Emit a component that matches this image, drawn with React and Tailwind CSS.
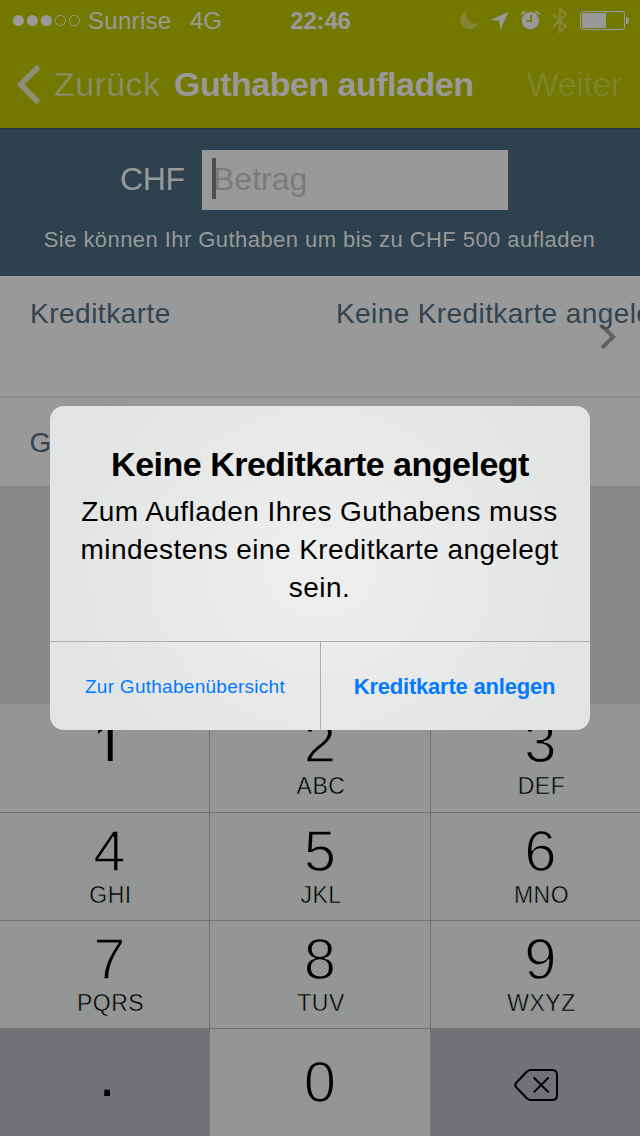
import React from "react";

function SignalDots() {
  return (
    <svg width="76" height="41" viewBox="12 0 76 41" className="block shrink-0">
      <g fill="#999999">
        <circle cx="18.4" cy="20.5" r="5.6" />
        <circle cx="32.4" cy="20.5" r="5.6" />
        <circle cx="46.4" cy="20.5" r="5.6" />
      </g>
      <g fill="none" stroke="#999999" strokeWidth="1">
        <circle cx="60.4" cy="20.5" r="5.1" />
        <circle cx="74.4" cy="20.5" r="5.1" />
      </g>
    </svg>
  );
}

function StatusIcons() {
  return (
    <svg width="180" height="41" viewBox="460 0 180 41" className="block shrink-0">
      <path d="M466.5 11.2A9.2 9.2 0 1 0 478 23.2A9.4 9.4 0 0 1 466.5 11.2Z" fill="#848635" />
      <path d="M508.3 12L490.2 19.9L499.3 20.8L500.4 30Z" fill="#999999" />
      <circle cx="530.4" cy="20.6" r="8.7" fill="#999999" />
      <path d="M521.8 14.8Q522 12 525.6 11.8M539 14.8Q538.8 12 535.2 11.8" fill="none" stroke="#999999" strokeWidth="1.8" />
      <path d="M531.2 14.8V21.2H526.4" fill="none" stroke="#737900" strokeWidth="1.8" />
      <path d="M552.8 14.3L566 26.6L559.8 32V8.8L566 14.3L552.8 27" fill="none" stroke="#86883c" strokeWidth="1.9" />
      <rect x="580.5" y="11.5" width="44" height="18" rx="2.5" fill="none" stroke="#999999" />
      <rect x="582" y="13" width="24" height="15" rx="0.8" fill="#999999" />
      <path d="M626 17H627.4Q629 17.6 629 20.5T627.4 24H626Z" fill="#999999" />
    </svg>
  );
}

function Header() {
  return (
    <header className="h-32 bg-[#737900] text-[#999999]">
      <div className="grid h-[41px] grid-cols-[1fr_auto_1fr] text-2xl/[41px]">
        <div className="flex pl-3">
          <SignalDots />
          <span className="w-[102px] tracking-[0.3px]">Sunrise</span>
          <span>4G</span>
        </div>
        <span className="pl-px font-bold tracking-[-0.2px]">22:46</span>
        <div className="flex justify-end">
          <StatusIcons />
        </div>
      </div>
      <div className="flex h-[86px] items-center text-[34px]/[40px]">
        <svg width="54" height="86" viewBox="0 41 54 86" className="block shrink-0">
          <path d="M38.5 66.8L20.6 84.5L38.5 102.4" fill="none" stroke="#8d8e77" strokeWidth="5.6" />
        </svg>
        <span className="-mt-px w-[120px] tracking-[0.4px] text-[#8c8e70] [-webkit-text-stroke:0.3px_#737900]">Zurück</span>
        <h1 className="-mt-px font-bold tracking-[-0.5px]">Guthaben aufladen</h1>
        <span className="-mt-px ml-auto pr-[18px] tracking-[-0.4px] text-[#81842e] [-webkit-text-stroke:0.4px_#737900]">Weiter</span>
      </div>
    </header>
  );
}

function AmountSection() {
  return (
    <section className="h-37 border-t border-[#273746] bg-[#2d414e] pt-[21px] text-[#999999]">
      <div className="flex h-15 pl-[120px]">
        <span className="w-[82px] text-[32px]/[58px] tracking-[-0.3px]">CHF</span>
        <div className="relative w-[306px] bg-[#999999] pl-[11px] text-[32px]/[58px] text-[#7a7a7f]">
          Betrag
          <span className="absolute top-2 left-2.5 h-[41px] w-1 bg-[#4f4f4f]" />
        </div>
      </div>
      <p className="mt-[19px] pr-px text-center text-[22px]/[22px] tracking-[0.44px] whitespace-nowrap">
        Sie können Ihr Guthaben um bis zu CHF 500 aufladen
      </p>
    </section>
  );
}

function List() {
  return (
    <section className="bg-[#999999] text-[28px]/[40px] tracking-[0.5px] text-[#32444f]">
      <div className="relative flex h-[122px] overflow-hidden border-b-2 border-[#8c8c8c] pt-[18px] pl-[30px] whitespace-nowrap">
        <span className="w-[306px] shrink-0">Kreditkarte</span>
        <span className="tracking-[0.4px]">Keine Kreditkarte angelegt</span>
        <svg width="20" height="28" viewBox="598 323 20 28" className="absolute top-[47px] left-[598px]">
          <path d="M601.5 325.5L613.2 336.7L602 347.8" fill="none" stroke="#4f4f4f" strokeOpacity="0.75" strokeWidth="4" />
        </svg>
      </div>
      <div className="flex h-22 items-center pt-0.5 pl-[29.5px]">G</div>
    </section>
  );
}

const KEYS = [
  ["1", ""],
  ["2", "ABC"],
  ["3", "DEF"],
  ["4", "GHI"],
  ["5", "JKL"],
  ["6", "MNO"],
  ["7", "PQRS"],
  ["8", "TUV"],
  ["9", "WXYZ"],
];

function Key({ digit, letters }) {
  const face =
    digit === "1"
      ? "pr-1.5 font-['Inter'] font-normal text-[54px]/[58px]"
      : "text-[58px]/[58px] [-webkit-text-stroke:1.5px_#939694]";
  return (
    <div className="flex flex-col items-center bg-[#939694] nth-[3n+1]:pl-2.5 nth-[3n]:pl-2.5">
      <span className={`mt-[9px] h-[58px] ${face}`}>{digit}</span>
      <span className="mt-[3px] pl-[2px] text-[23px]/[24px] tracking-[0.5px] [-webkit-text-stroke:0.5px_#939694]">{letters}</span>
    </div>
  );
}

function Keypad() {
  return (
    <section className="h-108 bg-[#707372] text-black">
      <div className="grid h-[325px] grid-cols-[209px_220px_209px] grid-rows-[108px_107px_107px] gap-px">
        {KEYS.map(([digit, letters]) => (
          <Key key={digit} digit={digit} letters={letters} />
        ))}
      </div>
      <div className="grid h-[107px] grid-cols-[210px_220px_210px]">
        <div className="-mt-px bg-[#707276] pl-1 text-center text-[60px]/[96px]">.</div>
        <div className="bg-[#939694] text-center text-[58px]/[105px] [-webkit-text-stroke:1.5px_#939694]">0</div>
        <div className="-mt-px bg-[#707276]">
          <svg width="210" height="108" viewBox="430 1028 210 108" fill="none" stroke="#000" strokeWidth="2">
            <path d="M530.5 1070H552Q557 1070 557 1075V1095Q557 1100 552 1100H530.5Q528.5 1100 527 1098.5L516 1087Q514.5 1085 516 1083L527 1071.5Q528.5 1070 530.5 1070Z" />
            <path d="M533.7 1077.5L548.6 1092.4M548.6 1077.5L533.7 1092.4" />
          </svg>
        </div>
      </div>
    </section>
  );
}

function Alert() {
  return (
    <div
      role="alertdialog"
      className="absolute top-[406px] left-[50px] flex h-81 w-135 flex-col overflow-hidden rounded-[14px] bg-[radial-gradient(ellipse_280px_260px_at_50%_50%,#efefef,#e2e3e3)] text-black"
    >
      <div className="h-[235px] pt-[38px] text-center">
        <h2 className="text-[34px]/[40px] font-bold tracking-[-0.5px]">Keine Kreditkarte angelegt</h2>
        <p className="mt-[9px] pr-px text-[28px]/[38px] tracking-[0.43px] whitespace-nowrap">
          Zum Aufladen Ihres Guthabens muss
          <br />
          mindestens eine Kreditkarte angelegt
          <br />
          sein.
        </p>
      </div>
      <div className="flex h-[89px] border-t border-[#aeaeb0] text-[#007aff]">
        <button className="w-[271px] border-r border-[#aeaeb0] pt-0.5 text-[19px] tracking-[0.27px]">Zur Guthabenübersicht</button>
        <button className="flex-1 pr-0.5 text-[22px] font-bold tracking-[-0.2px]">Kreditkarte anlegen</button>
      </div>
    </div>
  );
}

export default function App() {
  return (
    <main className="relative h-[1136px] w-[640px] overflow-hidden bg-[#888888] font-['Liberation_Sans',Arial,sans-serif]">
      <Header />
      <AmountSection />
      <List />
      <div className="h-[218px]" />
      <Keypad />
      <Alert />
    </main>
  );
}
